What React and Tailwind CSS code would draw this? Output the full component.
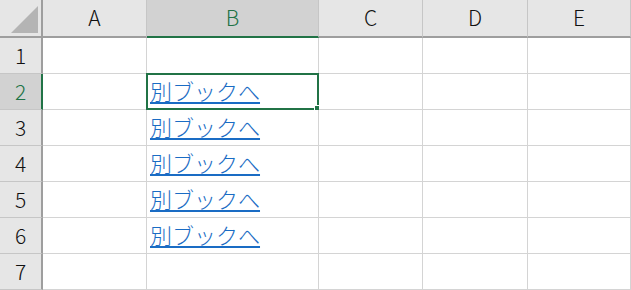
import React from 'react';

const cols = ['A', 'B', 'C', 'D', 'E'];
const rows = [1, 2, 3, 4, 5, 6, 7];
const links = [2, 3, 4, 5, 6];

const font = { fontFamily: '"Noto Sans CJK JP", "Noto Sans", sans-serif' };

function HeaderCell({ label, selected }) {
  return (
    <div
      className={
        'flex items-center justify-center border-r border-r-[#c6c6c6] border-b-2 text-[21px] font-light ' +
        (selected
          ? 'bg-[#d2d2d2] text-[#217346] border-b-[#217346]'
          : 'bg-[#e6e6e6] text-[#111] border-b-[#9e9e9e]')
      }
    >
      {label}
    </div>
  );
}

function RowHead({ n }) {
  const selected = n === 2;
  return (
    <div
      className={
        'flex items-center justify-center border-b border-b-[#c6c6c6] border-r-2 text-[21px] font-light ' +
        (selected
          ? 'bg-[#d2d2d2] text-[#217346] border-r-[#217346]'
          : 'bg-[#e6e6e6] text-[#111] border-r-[#9e9e9e]')
      }
    >
      {n}
    </div>
  );
}

function Cell({ row, col }) {
  const isLink = col === 'B' && links.includes(row);
  const active = col === 'B' && row === 2;
  return (
    <div className="relative border-r border-b border-[#d4d4d4] bg-white">
      {isLink && (
        <a
          href="#"
          className="absolute left-[3px] bottom-[8px] text-[22px] leading-none font-light text-[#1a6cc4] underline decoration-[1.5px] underline-offset-[2px]"
        >
          別ブックへ
        </a>
      )}
      {active && (
        <div className="absolute -left-[1px] -top-[1px] -right-[1px] -bottom-[1px] border-2 border-[#217346]">
          <div className="absolute -right-[4px] -bottom-[4px] w-[7px] h-[7px] bg-[#217346] border border-white" />
        </div>
      )}
    </div>
  );
}

export default function App() {
  return (
    <div
      className="grid w-[631px] h-[290px] overflow-hidden bg-white"
      style={{
        ...font,
        gridTemplateColumns: '43px 104px 172px 104px 105px 1fr',
        gridTemplateRows: '38px repeat(7, 36px)',
      }}
    >
      <div className="relative bg-[#e6e6e6] border-r-2 border-b-2 border-[#9e9e9e]">
        <svg className="absolute left-0 top-0" width="41" height="36" viewBox="0 0 41 36">
          <polygon points="11,33 38,33 38,6" fill="#b4b4b4" />
        </svg>
      </div>
      {cols.map((c) => (
        <HeaderCell key={c} label={c} selected={c === 'B'} />
      ))}
      {rows.map((r) => (
        <React.Fragment key={r}>
          <RowHead n={r} />
          {cols.map((c) => (
            <Cell key={c} row={r} col={c} />
          ))}
        </React.Fragment>
      ))}
    </div>
  );
}
